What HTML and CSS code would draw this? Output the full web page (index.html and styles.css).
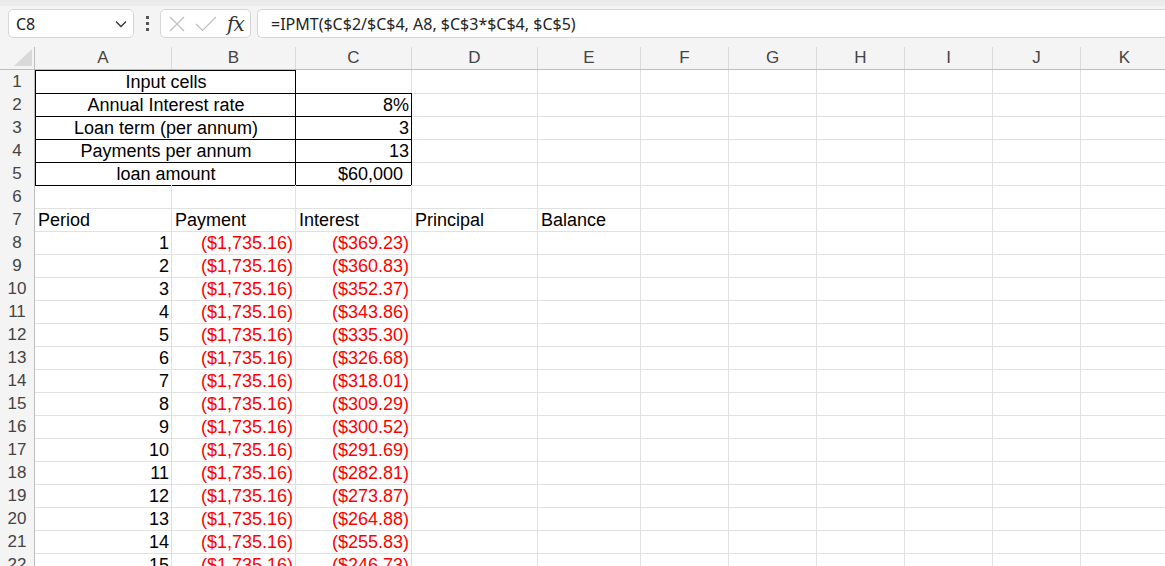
FILE: index.html
```html
<!DOCTYPE html>
<html lang="en">
<head>
    <meta charset="UTF-8">
    <title>Loan schedule - IPMT</title>
    <link rel="stylesheet" href="styles.css">
</head>
<body>
    <div class="ribbon-edge"></div>

    <!-- Formula bar -->
    <div class="formula-bar">
        <div class="name-box">
            <span>C8</span>
            <svg class="chevron" width="12" height="8" viewBox="0 0 12 8"><path d="M1 1.5 L6 6.5 L11 1.5" fill="none" stroke="#333" stroke-width="1.3"/></svg>
        </div>
        <div class="grip">
            <span></span><span></span><span></span>
        </div>
        <div class="fx-box">
            <svg width="18" height="18" viewBox="0 0 18 18"><path d="M2 2 L16 16 M16 2 L2 16" stroke="#bdbdbd" stroke-width="1.2" fill="none"/></svg>
            <svg width="22" height="16" viewBox="0 0 22 16"><path d="M1 8 L7.5 14.5 L21 1" stroke="#bdbdbd" stroke-width="1.2" fill="none"/></svg>
            <span class="fx">fx</span>
        </div>
        <div class="formula-input">=IPMT($C$2/$C$4, A8, $C$3*$C$4, $C$5)</div>
    </div>

    <!-- Sheet -->
    <div class="sheet">
        <div class="row col-head">
            <div class="corner"><svg width="18" height="17" viewBox="0 0 18 17"><polygon points="18,0 18,17 0,17" fill="#d9d9d9"/></svg></div>
            <div>A</div><div>B</div><div>C</div><div>D</div><div>E</div>
            <div>F</div><div>G</div><div>H</div><div>I</div><div>J</div><div>K</div>
        </div>

        <div class="row">
            <div class="rh">1</div>
            <div class="c merged boxed top center">Input cells</div>
            <div class="c under-box"></div>
            <div class="c"></div><div class="c"></div><div class="c rest"></div>
        </div>
        <div class="row">
            <div class="rh">2</div>
            <div class="c merged boxed center">Annual Interest rate</div>
            <div class="c boxed num">8%</div>
            <div class="c"></div><div class="c"></div><div class="c rest"></div>
        </div>
        <div class="row">
            <div class="rh">3</div>
            <div class="c merged boxed center">Loan term (per annum)</div>
            <div class="c boxed num">3</div>
            <div class="c"></div><div class="c"></div><div class="c rest"></div>
        </div>
        <div class="row">
            <div class="rh">4</div>
            <div class="c merged boxed center">Payments per annum</div>
            <div class="c boxed num">13</div>
            <div class="c"></div><div class="c"></div><div class="c rest"></div>
        </div>
        <div class="row">
            <div class="rh">5</div>
            <div class="c merged boxed center">loan amount</div>
            <div class="c boxed num currency">$60,000</div>
            <div class="c"></div><div class="c"></div><div class="c rest"></div>
        </div>
        <div class="row">
            <div class="rh">6</div>
            <div class="c"></div><div class="c"></div><div class="c"></div><div class="c"></div><div class="c"></div><div class="c rest"></div>
        </div>
        <div class="row">
            <div class="rh">7</div>
            <div class="c">Period</div><div class="c">Payment</div><div class="c">Interest</div><div class="c">Principal</div><div class="c">Balance</div><div class="c rest"></div>
        </div>
        <div class="row">
            <div class="rh">8</div>
            <div class="c num">1</div><div class="c num neg">($1,735.16)</div><div class="c num neg">($369.23)</div><div class="c"></div><div class="c"></div><div class="c rest"></div>
        </div>
        <div class="row">
            <div class="rh">9</div>
            <div class="c num">2</div><div class="c num neg">($1,735.16)</div><div class="c num neg">($360.83)</div><div class="c"></div><div class="c"></div><div class="c rest"></div>
        </div>
        <div class="row">
            <div class="rh">10</div>
            <div class="c num">3</div><div class="c num neg">($1,735.16)</div><div class="c num neg">($352.37)</div><div class="c"></div><div class="c"></div><div class="c rest"></div>
        </div>
        <div class="row">
            <div class="rh">11</div>
            <div class="c num">4</div><div class="c num neg">($1,735.16)</div><div class="c num neg">($343.86)</div><div class="c"></div><div class="c"></div><div class="c rest"></div>
        </div>
        <div class="row">
            <div class="rh">12</div>
            <div class="c num">5</div><div class="c num neg">($1,735.16)</div><div class="c num neg">($335.30)</div><div class="c"></div><div class="c"></div><div class="c rest"></div>
        </div>
        <div class="row">
            <div class="rh">13</div>
            <div class="c num">6</div><div class="c num neg">($1,735.16)</div><div class="c num neg">($326.68)</div><div class="c"></div><div class="c"></div><div class="c rest"></div>
        </div>
        <div class="row">
            <div class="rh">14</div>
            <div class="c num">7</div><div class="c num neg">($1,735.16)</div><div class="c num neg">($318.01)</div><div class="c"></div><div class="c"></div><div class="c rest"></div>
        </div>
        <div class="row">
            <div class="rh">15</div>
            <div class="c num">8</div><div class="c num neg">($1,735.16)</div><div class="c num neg">($309.29)</div><div class="c"></div><div class="c"></div><div class="c rest"></div>
        </div>
        <div class="row">
            <div class="rh">16</div>
            <div class="c num">9</div><div class="c num neg">($1,735.16)</div><div class="c num neg">($300.52)</div><div class="c"></div><div class="c"></div><div class="c rest"></div>
        </div>
        <div class="row">
            <div class="rh">17</div>
            <div class="c num">10</div><div class="c num neg">($1,735.16)</div><div class="c num neg">($291.69)</div><div class="c"></div><div class="c"></div><div class="c rest"></div>
        </div>
        <div class="row">
            <div class="rh">18</div>
            <div class="c num">11</div><div class="c num neg">($1,735.16)</div><div class="c num neg">($282.81)</div><div class="c"></div><div class="c"></div><div class="c rest"></div>
        </div>
        <div class="row">
            <div class="rh">19</div>
            <div class="c num">12</div><div class="c num neg">($1,735.16)</div><div class="c num neg">($273.87)</div><div class="c"></div><div class="c"></div><div class="c rest"></div>
        </div>
        <div class="row">
            <div class="rh">20</div>
            <div class="c num">13</div><div class="c num neg">($1,735.16)</div><div class="c num neg">($264.88)</div><div class="c"></div><div class="c"></div><div class="c rest"></div>
        </div>
        <div class="row">
            <div class="rh">21</div>
            <div class="c num">14</div><div class="c num neg">($1,735.16)</div><div class="c num neg">($255.83)</div><div class="c"></div><div class="c"></div><div class="c rest"></div>
        </div>
        <div class="row">
            <div class="rh">22</div>
            <div class="c num">15</div><div class="c num neg">($1,735.16)</div><div class="c num neg">($246.73)</div><div class="c"></div><div class="c"></div><div class="c rest"></div>
        </div>
    </div>
</body>
</html>
```

FILE: styles.css
```css
body {
    margin: 0;
    width: 1165px;
    height: 566px;
    overflow: hidden;
    background-color: #fff;
    font-family: "Liberation Sans", Arial, sans-serif;
}

.ribbon-edge {
    height: 6px;
    background-color: #ebebeb;
    box-shadow: 0 1px 2px rgba(0, 0, 0, 0.08);
}

/* formula bar */
.formula-bar {
    display: flex;
    align-items: flex-start;
    height: 41px;
    box-sizing: border-box;
    padding: 3px 0 0 8px;
    background-color: #f4f4f4;
    font-family: "Noto Sans", "Open Sans", sans-serif;
    color: #222;
}

.name-box,
.fx-box,
.formula-input {
    height: 29px;
    box-sizing: border-box;
    background-color: #fff;
    border: 1px solid #d6d6d6;
    border-radius: 5px;
    display: flex;
    align-items: center;
}

.name-box {
    width: 126px;
    padding: 0 6px 0 7px;
    justify-content: space-between;
    font-size: 16px;
}

.grip {
    width: 26px;
    height: 29px;
    display: flex;
    flex-direction: column;
    align-items: center;
    justify-content: center;
    gap: 3px;
}

.grip span {
    width: 3px;
    height: 3px;
    background-color: #555;
}

.fx-box {
    width: 91px;
    padding: 0 0 0 7px;
    gap: 9px;
}

.fx {
    font-family: "DejaVu Serif", "Liberation Serif", serif;
    font-style: italic;
    font-size: 20px;
    color: #333;
    margin-left: 1px;
    letter-spacing: -1px;
}

.formula-input {
    flex: 1;
    margin-left: 6px;
    padding-left: 13px;
    border-right: none;
    border-radius: 5px 0 0 5px;
    font-size: 16px;
}

/* sheet grid */
.row {
    display: grid;
    grid-template-columns: 35px 137px 124px 116px 126px 103px repeat(6, 88px);
    height: 23px;
}

.col-head {
    background-color: #f4f4f4;
    border-bottom: 1px solid #bdbdbd;
    box-sizing: border-box;
}

.col-head div {
    border-right: 1px solid #dadada;
    text-align: center;
    color: #444;
    font-size: 17px;
    line-height: 22px;
}

.col-head .corner {
    display: flex;
    align-items: flex-end;
    justify-content: flex-end;
    padding: 0 2px 3px 0;
    border-right: 1px solid #bdbdbd;
}

.rh {
    background-color: #f4f4f4;
    border-right: 1px solid #bdbdbd;
    border-bottom: 1px solid #dcdcdc;
    color: #444;
    font-size: 17px;
    line-height: 23px;
    text-align: center;
}

.c {
    border-right: 1px solid #e1e1e1;
    border-bottom: 1px solid #e1e1e1;
    padding: 1px 2px 0 3px;
    font-size: 18px;
    line-height: 23px;
    color: #000;
    white-space: nowrap;
    overflow: hidden;
}

.rest {
    grid-column: span 6;
    border-right: none;
    background: repeating-linear-gradient(to right, transparent 0 87px, #e1e1e1 87px 88px);
}

.merged {
    grid-column: span 2;
}

.center {
    text-align: center;
}

.num {
    text-align: right;
}

.neg {
    color: #f00;
}

.currency {
    padding-right: 8px;
}

.boxed {
    border-right-color: #000;
    border-bottom-color: #000;
}

.merged.boxed {
    border-left: 1px solid #000;
}

.top {
    border-top: 1px solid #000;
    padding-top: 0;
}

.under-box {
    border-bottom-color: #000;
}
```
